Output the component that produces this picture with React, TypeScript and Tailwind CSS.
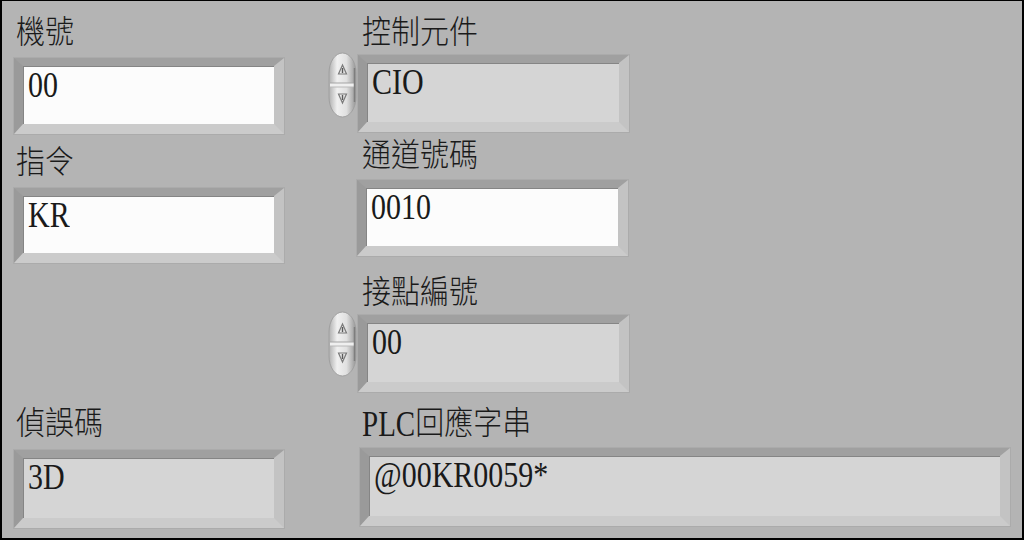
import React from "react";

const labelFont = { fontFamily: '"Liberation Serif", "Noto Sans CJK TC", serif' };

function Label({ text, latin }: { text: string; latin?: string }) {
  return (
    <div
      className="h-[30px] text-[29px] leading-[30px] text-[#1a1a1a] font-light whitespace-nowrap"
      style={labelFont}
    >
      {latin ? (
        <span className="inline-block scale-y-125 origin-center">{latin}</span>
      ) : null}
      <span className="inline-block scale-y-110 origin-center">{text}</span>
    </div>
  );
}

function Frame({
  value,
  white,
  w,
  h,
}: {
  value: string;
  white?: boolean;
  w: string;
  h: string;
}) {
  return (
    <div
      className={`${w} ${h} box-border border-t-[8px] border-l-[9px] border-r-[10px] border-b-[10px] border-t-[#a0a0a0] border-l-[#9a9a9a] border-r-[#c3c3c3] border-b-[#cbcbcb] shadow-[0_0_0_1px_#ababab]`}
    >
      <div
        className={`w-full h-full ${white ? "bg-[#fcfcfc]" : "bg-[#d5d5d5]"} pl-[5px] pt-[4px] shadow-[inset_1px_1px_0_#858585]`}
      >
        <span
          className="inline-block text-[30px] leading-[30px] text-[#1a1a1a] scale-y-120 origin-center whitespace-nowrap"
          style={{ fontFamily: '"Liberation Serif", serif' }}
        >
          {value}
        </span>
      </div>
    </div>
  );
}

function Spinner() {
  return (
    <svg width="30" height="66" viewBox="0 0 30 66" className="shrink-0">
      <defs>
        <linearGradient id="sg" x1="0" y1="0" x2="1" y2="0">
          <stop offset="0" stopColor="#b0b0b0" />
          <stop offset="0.3" stopColor="#f0f0f0" />
          <stop offset="0.65" stopColor="#e0e0e0" />
          <stop offset="1" stopColor="#959595" />
        </linearGradient>
      </defs>
      <rect x="1" y="1" width="27" height="64" rx="13.5" ry="20" fill="url(#sg)" stroke="#a0a0a0" strokeWidth="1" />
      <rect x="2" y="31" width="25" height="4" fill="#efefef" />
      <line x1="2" y1="31" x2="27" y2="31" stroke="#a5a5a5" />
      <line x1="2" y1="35" x2="27" y2="35" stroke="#b8b8b8" />
      <path d="M14.5 13 L10.5 22 L18.5 22 Z" fill="none" stroke="#7a7a7a" strokeWidth="1.2" />
      <line x1="14.5" y1="16" x2="14.5" y2="21" stroke="#5a5a5a" strokeWidth="1.4" />
      <path d="M10.5 42 L18.5 42 L14.5 51 Z" fill="none" stroke="#7a7a7a" strokeWidth="1.2" />
      <line x1="14.5" y1="43" x2="14.5" y2="48" stroke="#5a5a5a" strokeWidth="1.4" />
      <line x1="26.5" y1="16" x2="26.5" y2="50" stroke="#7e7e7e" strokeWidth="1.5" />
    </svg>
  );
}

export default function App() {
  return (
    <div className="w-[1024px] h-[540px] box-border bg-[#b4b4b4] border-l-2 border-t border-r-2 border-b-2 border-black overflow-hidden flex flex-col">
      <div className="flex flex-row items-start pt-[16px]">
        {/* left column */}
        <div className="ml-[12px] w-[270px] flex flex-col">
          <div className="pl-[2px]">
            <Label text="機號" />
          </div>
          <div className="mt-[11px]">
            <Frame value="00" white w="w-[270px]" h="h-[76px]" />
          </div>
          <div className="pl-[2px] mt-[13px]">
            <Label text="指令" />
          </div>
          <div className="mt-[11px]">
            <Frame value="KR" white w="w-[270px]" h="h-[75px]" />
          </div>
        </div>
        {/* right column */}
        <div className="ml-[44px] flex flex-col">
          <div className="pl-[34px]">
            <Label text="控制元件" />
          </div>
          <div className="mt-[8px] flex flex-row items-start">
            <div className="-mt-[3px]">
              <Spinner />
            </div>
            <Frame value="CIO" w="w-[271px]" h="h-[77px]" />
          </div>
          <div className="pl-[34px] mt-[8px]">
            <Label text="通道號碼" />
          </div>
          <div className="pl-[29px] mt-[10px]">
            <Frame value="0010" white w="w-[271px]" h="h-[76px]" />
          </div>
          <div className="pl-[34px] mt-[21px]">
            <Label text="接點編號" />
          </div>
          <div className="mt-[8px] flex flex-row items-start">
            <div className="-mt-[4px]">
              <Spinner />
            </div>
            <Frame value="00" w="w-[271px]" h="h-[77px]" />
          </div>
        </div>
      </div>
      <div className="flex flex-row items-start mt-[16px]">
        <div className="ml-[12px] w-[270px] flex flex-col">
          <div className="pl-[2px]">
            <Label text="偵誤碼" />
          </div>
          <div className="mt-[12px]">
            <Frame value="3D" w="w-[270px]" h="h-[78px]" />
          </div>
        </div>
        <div className="ml-[76px] flex flex-col">
          <div className="pl-[2px]">
            <Label latin="PLC" text="回應字串" />
          </div>
          <div className="mt-[10px]">
            <Frame value="@00KR0059*" w="w-[650px]" h="h-[78px]" />
          </div>
        </div>
      </div>
    </div>
  );
}
